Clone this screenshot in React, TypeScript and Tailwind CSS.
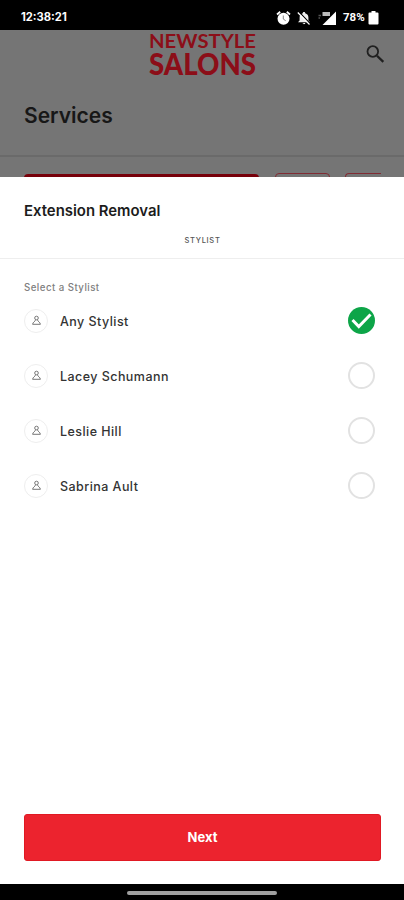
import { useState } from "react";
import clsx from "clsx";

const stylists = ["Any Stylist", "Lacey Schumann", "Leslie Hill", "Sabrina Ault"];

function StatusBar() {
  return (
    <div className="flex h-[30px] shrink-0 items-center justify-between bg-black pt-[5px] pr-[25px] pl-[21px] text-white">
      <span className="pt-px font-['Inter',sans-serif] text-[11.2px] leading-none font-bold">12:38:21</span>
      <div className="flex items-center">
        <svg className="h-4 w-[15px]" viewBox="0 0 15 16" aria-hidden>
          <path d="M1 4.5 4.2 1.7M14 4.5 10.8 1.7" stroke="#fff" strokeWidth="1.8" />
          <circle cx="7.5" cy="8.7" r="6" fill="#fff" />
          <path d="M7.3 5.5v3.6l2.4 1.6" stroke="#888" strokeWidth="1" fill="none" />
        </svg>
        <svg className="ml-[6px] h-4 w-[14px]" viewBox="0 0 14 16" aria-hidden>
          <path d="M7 2c.8 0 1.2.5 1.2 1.2C10.3 3.8 11.4 5.5 11.4 7.5V10.5L13 12.3H1l1.6-1.8V7.5c0-2 1.1-3.7 3.2-4.3C5.8 2.5 6.2 2 7 2ZM5.7 13h2.6c0 1.6-2.6 1.6-2.6 0Z" fill="#eee" />
          <path d="M2 1.8 13.5 14" stroke="#000" strokeWidth="1.2" />
          <path d="M.8 2.5 12.5 14.5" stroke="#fff" strokeWidth="1.2" />
        </svg>
        <svg className="ml-[6px] h-4 w-[20px]" viewBox="0 0 20 16" aria-hidden>
          <path d="M19 1.5v13.5H5.5Z" fill="#fff" />
          <path d="M5.5 2h7.5v4H5.5z" fill="#bbb" />
          <path d="M1.5 5.5h2.5M1.5 8h1.5" stroke="#555" strokeWidth="1.5" />
        </svg>
        <span className="ml-[6px] w-[22px] font-['Roboto',sans-serif] text-[11.5px] leading-none font-bold whitespace-nowrap">
          78%
        </span>
        <svg className="ml-[3px] h-[15px] w-[11px]" viewBox="0 0 11 15" aria-hidden>
          <path d="M3.5 1h4v1.5H9.5a1 1 0 0 1 1 1V13.5a1 1 0 0 1-1 1h-8a1 1 0 0 1-1-1V3.5a1 1 0 0 1 1-1h2Z" fill="#fff" />
        </svg>
      </div>
    </div>
  );
}

function ServicesHeader() {
  return (
    <header className="flex h-[147px] shrink-0 flex-col overflow-hidden bg-[#757575]">
      <div className="grid h-[62px] shrink-0 grid-cols-[1fr_108px_1fr]">
        <span />
        <svg className="h-[50px] w-[108px] overflow-visible" viewBox="0 0 108 50" role="img" aria-label="Newstyle Salons">
          <g fill="#8c0e18" fontFamily="Lato, sans-serif">
            <text x="1" y="17.5" fontSize="19.5" fontWeight="700" textLength="107" lengthAdjust="spacingAndGlyphs">
              NEWSTYLE
            </text>
            <text x="1" y="44.5" fontSize="29.5" fontWeight="900" textLength="107" lengthAdjust="spacingAndGlyphs">
              SALONS
            </text>
          </g>
        </svg>
        <button type="button" aria-label="Search" className="mt-[14px] mr-[19px] h-5 w-5 justify-self-end">
          <svg className="h-5 w-5" viewBox="0 0 20 20" fill="none" stroke="#202020">
            <circle cx="7.8" cy="7.5" r="5.3" strokeWidth="1.8" />
            <path d="m12 11.7 6.3 6.2" strokeWidth="2.3" />
          </svg>
        </button>
      </div>
      <h1 className="h-[65px] shrink-0 border-b-2 border-[#6a6a6a] pt-[10px] pl-6 font-['Inter',sans-serif] text-[21px] leading-[28px] font-semibold text-[#171717]">
        Services
      </h1>
      <div className="mt-[16px] flex h-8 shrink-0 pl-6">
        <div className="mt-px w-[235px] rounded bg-[#77000a]" />
        <div className="ml-4 w-[55px] rounded border border-[#812c34]" />
        <div className="ml-[15px] w-[36px] rounded-l border border-r-0 border-[#812c34]" />
      </div>
    </header>
  );
}

function Avatar() {
  return (
    <div className="flex h-6 w-6 items-center justify-center rounded-full border border-[#eeeeee]">
      <svg className="h-[11px] w-[11px]" viewBox="0 0 11 11" fill="none" stroke="#777" aria-hidden>
        <circle cx="5.5" cy="3" r="1.8" />
        <path d="M4.5 4.8C4.5 6.5 1.8 7 1.6 9.3H9.4C9.2 7 6.5 6.5 6.5 4.8" />
      </svg>
    </div>
  );
}

export default function App() {
  const [selected, setSelected] = useState(0);

  return (
    <div className="flex h-[900px] w-[404px] flex-col overflow-hidden bg-white">
      <StatusBar />
      <ServicesHeader />
      <main className="flex flex-1 flex-col font-['Inter',sans-serif]">
        <h2 className="h-[43px] pt-6 pl-6 text-[14.9px] leading-5 font-semibold text-[#1c1c1c]">Extension Removal</h2>
        <div className="flex h-[39px] items-center justify-center border-b border-[#eeeeee] pt-1 pl-px text-[7.5px] font-medium tracking-[0.7px] text-[#555]">
          STYLIST
        </div>
        <p className="mt-[23px] h-[11px] pl-6 text-[9.7px] leading-3 font-medium tracking-[0.45px] text-[#808080]">
          Select a Stylist
        </p>
        <ul>
          {stylists.map((name, i) => (
            <li key={name}>
              <button
                type="button"
                onClick={() => setSelected(i)}
                className="flex h-[55px] w-full items-center pr-[29px] pl-6 text-left"
              >
                <Avatar />
                <span className="ml-3 flex-1 pt-[3px] text-[12.5px] font-medium tracking-[0.45px] text-[#333]">{name}</span>
                <span
                  className={clsx(
                    "flex h-[27px] w-[27px] items-center justify-center rounded-full",
                    selected === i ? "bg-[#0da548]" : "border-2 border-[#e2e2e2]"
                  )}
                >
                  {selected === i && (
                    <svg className="h-[27px] w-[27px]" viewBox="0 0 27 27" fill="none" stroke="#fff" strokeWidth="3">
                      <path d="m4.5 13 6.3 6.5L22.5 7.5" />
                    </svg>
                  )}
                </span>
              </button>
            </li>
          ))}
        </ul>
        <button
          type="button"
          className="mx-6 mt-auto mb-[23px] h-[47px] w-[357px] rounded-[3px] border border-[#e01923] bg-[#ec232e] pt-px text-[13px] font-bold text-white"
        >
          Next
        </button>
      </main>
      <div className="flex h-4 shrink-0 items-center justify-center bg-black pt-px">
        <div className="h-1 w-[150px] rounded-full bg-[#a0a0a0]" />
      </div>
    </div>
  );
}
